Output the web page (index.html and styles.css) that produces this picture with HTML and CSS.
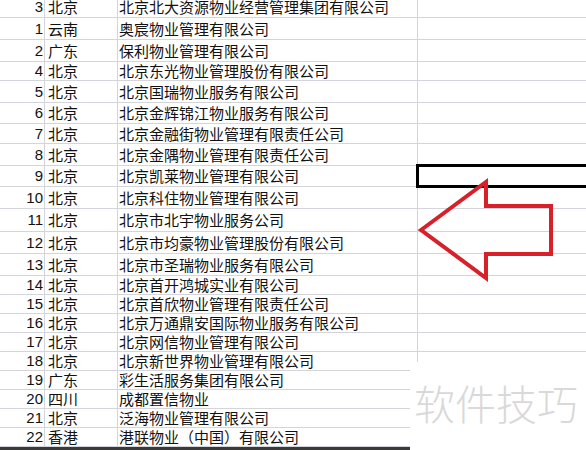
FILE: index.html
```html
<!DOCTYPE html>
<html lang="zh-CN">
<head>
<meta charset="utf-8">
<title>物业公司列表</title>
<link rel="stylesheet" href="styles.css">
</head>
<body>
<div class="page">
  <div class="sheet">
    <div class="row h22"><div class="num">3</div><div class="prov">北京</div><div class="name">北京北大资源物业经营管理集团有限公司</div><div class="rest"></div></div>
    <div class="row h22"><div class="num">1</div><div class="prov">云南</div><div class="name">奥宸物业管理有限公司</div><div class="rest"></div></div>
    <div class="row h22"><div class="num">2</div><div class="prov">广东</div><div class="name">保利物业管理有限公司</div><div class="rest"></div></div>
    <div class="row h19"><div class="num">4</div><div class="prov">北京</div><div class="name">北京东光物业管理股份有限公司</div><div class="rest"></div></div>
    <div class="row h22"><div class="num">5</div><div class="prov">北京</div><div class="name">北京国瑞物业服务有限公司</div><div class="rest"></div></div>
    <div class="row h21"><div class="num">6</div><div class="prov">北京</div><div class="name">北京金辉锦江物业服务有限公司</div><div class="rest"></div></div>
    <div class="row h20"><div class="num">7</div><div class="prov">北京</div><div class="name">北京金融街物业管理有限责任公司</div><div class="rest"></div></div>
    <div class="row h22"><div class="num">8</div><div class="prov">北京</div><div class="name">北京金隅物业管理有限责任公司</div><div class="rest"></div></div>
    <div class="row h21"><div class="num">9</div><div class="prov">北京</div><div class="name">北京凯莱物业管理有限公司</div><div class="rest"></div></div>
    <div class="row h22"><div class="num">10</div><div class="prov">北京</div><div class="name">北京科住物业管理有限公司</div><div class="rest"></div></div>
    <div class="row h23"><div class="num">11</div><div class="prov">北京</div><div class="name">北京市北宇物业服务公司</div><div class="rest"></div></div>
    <div class="row h22"><div class="num">12</div><div class="prov">北京</div><div class="name">北京市均豪物业管理股份有限公司</div><div class="rest"></div></div>
    <div class="row h22"><div class="num">13</div><div class="prov">北京</div><div class="name">北京市圣瑞物业服务有限公司</div><div class="rest"></div></div>
    <div class="row h19"><div class="num">14</div><div class="prov">北京</div><div class="name">北京首开鸿城实业有限公司</div><div class="rest"></div></div>
    <div class="row h19"><div class="num">15</div><div class="prov">北京</div><div class="name">北京首欣物业管理有限责任公司</div><div class="rest"></div></div>
    <div class="row h19"><div class="num">16</div><div class="prov">北京</div><div class="name">北京万通鼎安国际物业服务有限公司</div><div class="rest"></div></div>
    <div class="row h19"><div class="num">17</div><div class="prov">北京</div><div class="name">北京网信物业管理有限公司</div><div class="rest"></div></div>
    <div class="row h19"><div class="num">18</div><div class="prov">北京</div><div class="name">北京新世界物业管理有限公司</div><div class="rest"></div></div>
    <div class="row h19"><div class="num">19</div><div class="prov">广东</div><div class="name">彩生活服务集团有限公司</div><div class="rest"></div></div>
    <div class="row h19"><div class="num">20</div><div class="prov">四川</div><div class="name">成都置信物业</div><div class="rest"></div></div>
    <div class="row h19"><div class="num">21</div><div class="prov">北京</div><div class="name">泛海物业管理有限公司</div><div class="rest"></div></div>
    <div class="row h19"><div class="num">22</div><div class="prov">香港</div><div class="name">港联物业（中国）有限公司</div><div class="rest"></div></div>
    <div class="darkbar"></div>
  </div>

  <div class="selection"></div>

  <svg class="arrow" width="586" height="450" viewBox="0 0 586 450" aria-hidden="true">
    <polygon points="421,230 486,182 486,206 551,206 551,254 486,254 486,278" fill="none" stroke="#d8202a" stroke-width="4" stroke-linejoin="miter"/>
  </svg>

  <div class="watermark">软件技巧</div>
</div>
</body>
</html>
```

FILE: styles.css
```css
html, body {
  margin: 0;
  padding: 0;
  background: #ffffff;
}

body {
  width: 586px;
  height: 450px;
  overflow: hidden;
  font-family: "Noto Sans CJK SC", "Noto Sans", sans-serif;
  color: #111;
}

.page {
  position: relative;
  width: 586px;
  height: 450px;
  overflow: hidden;
}

.sheet {
  margin-top: -4px;
  display: flex;
  flex-direction: column;
}

.row {
  display: grid;
  grid-template-columns: 45px 73px 300px 1fr;
  box-sizing: border-box;
  border-bottom: 1px solid #d3d5da;
}

.h19 { height: 19px; }
.h20 { height: 20px; }
.h21 { height: 21px; }
.h22 { height: 22px; }
.h23 { height: 23px; }

.row > div {
  box-sizing: border-box;
  display: flex;
  align-items: center;
  white-space: nowrap;
  line-height: 16px;
  border-right: 1px solid #d3d5da;
}

.num {
  justify-content: flex-end;
  padding-right: 1px;
  font-family: "Liberation Sans", "Noto Sans", sans-serif;
  font-size: 15px;
}

.prov {
  padding-left: 3px;
  font-size: 15px;
}

.name {
  padding-left: 1px;
  font-size: 15px;
}

.row > .rest {
  border-right: none;
}

.darkbar {
  width: 410px;
  height: 10px;
  background: #3a3a3a;
}

.selection {
  position: absolute;
  left: 416px;
  top: 164px;
  width: 200px;
  height: 24px;
  box-sizing: border-box;
  border: 3px solid #000;
}

.arrow {
  position: absolute;
  left: 0;
  top: 0;
}

.watermark {
  position: absolute;
  left: 410px;
  top: 362px;
  right: 0;
  bottom: 0;
  background: #fff;
  box-sizing: border-box;
  padding-left: 4px;
  padding-top: 20px;
  font-family: "Noto Sans CJK SC", sans-serif;
  font-size: 41px;
  line-height: 1;
  font-weight: 300;
  color: #d9d9d9;
  white-space: nowrap;
}
```
